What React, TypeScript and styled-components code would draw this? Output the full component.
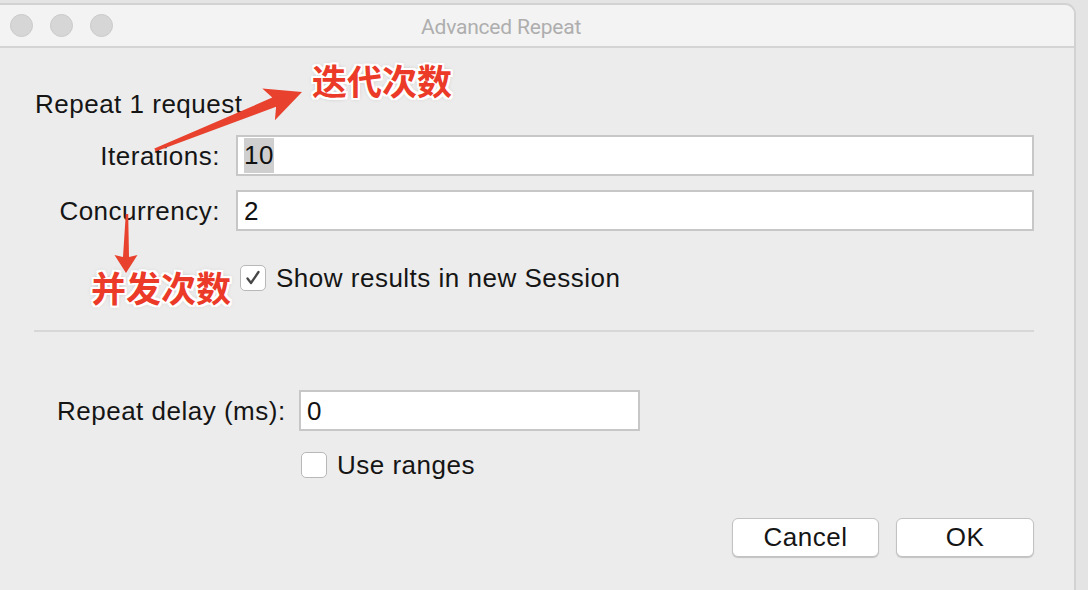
import styled, { createGlobalStyle } from "styled-components";

const GlobalStyle = createGlobalStyle`
  html, body {
    margin: 0;
    padding: 0;
    background: #e4e4e4;
  }
  * { box-sizing: border-box; }
`;

export default function App() {
  return (
    <Page>
      <GlobalStyle />
      <Window>
        <TitleBar>
          <Lights>
            <Light />
            <Light />
            <Light />
          </Lights>
          <Title>Advanced Repeat</Title>
        </TitleBar>
        <Body>
          <Heading>Repeat 1 request</Heading>
          <TopForm>
            <Label>Iterations:</Label>
            <Field>
              <Selected>10</Selected>
            </Field>
            <Label>Concurrency:</Label>
            <Field>2</Field>
            <CheckRow $first>
              <Box>
                <CheckMark />
              </Box>
              <CheckText>Show results in new Session</CheckText>
            </CheckRow>
          </TopForm>
          <Divider />
          <DelayForm>
            <Label>Repeat delay (ms):</Label>
            <Field>0</Field>
            <CheckRow>
              <Box />
              <CheckText>Use ranges</CheckText>
            </CheckRow>
          </DelayForm>
          <Buttons>
            <Button $w={147}>Cancel</Button>
            <Button $w={138}>OK</Button>
          </Buttons>
        </Body>
      </Window>

      <Arrows width="1088" height="590" viewBox="0 0 1088 590">
        <polygon
          fill="#e8412d"
          points="154.4,148.6 272.3,97.6 262.3,88.6 302,92 274.9,120.2 276.1,106.8 155.6,151.4"
        />
        <polygon
          fill="#e8412d"
          points="125.8,214 128.2,214 129,257 137.5,255 126,273 114.5,255 123,257"
        />
      </Arrows>
      <Note $x={312} $y={61}>迭代次数</Note>
      <Note $x={91} $y={268}>并发次数</Note>
    </Page>
  );
}

function CheckMark() {
  return (
    <svg width="22" height="22" viewBox="0 0 22 22">
      <polyline
        points="5.5,11.5 9,16 16.5,5"
        fill="none"
        stroke="#474747"
        strokeWidth="2.3"
        strokeLinecap="round"
        strokeLinejoin="round"
      />
    </svg>
  );
}

const Page = styled.div`
  position: relative;
  width: 1088px;
  height: 590px;
  overflow: hidden;
  padding: 3px 12px 0 0;
  font-family: "Liberation Sans", Arial, sans-serif;
  color: #151515;
`;

const Window = styled.div`
  height: 600px;
  background: #ececec;
  border: 2px solid #d2d2d2;
  border-left: none;
  border-radius: 0 11px 0 0;
  overflow: hidden;
`;

const TitleBar = styled.div`
  display: flex;
  align-items: center;
  height: 43px;
  background: #f3f3f3;
  border-bottom: 2px solid #d4d4d4;
  padding-left: 10px;
`;

const Lights = styled.div`
  display: flex;
  gap: 17px;
`;

const Light = styled.span`
  width: 23px;
  height: 23px;
  border-radius: 50%;
  background: #d6d6d6;
  border: 1px solid #cacaca;
`;

const Title = styled.div`
  margin: 3px 0 0 308px;
  font-family: Roboto, "Liberation Sans", sans-serif;
  font-size: 21px;
  letter-spacing: -0.2px;
  color: #aeaeae;
  line-height: 26px;
`;

const Body = styled.div`
  display: flex;
  flex-direction: column;
  padding: 41px 40px 0 35px;
  font-size: 26px;
  letter-spacing: 0.5px;
`;

const Heading = styled.div`
  line-height: 30px;
`;

const TopForm = styled.div`
  display: grid;
  grid-template-columns: 185px 1fr;
  column-gap: 16px;
  row-gap: 14px;
  align-items: center;
  margin-top: 16px;
`;

const DelayForm = styled.div`
  display: grid;
  grid-template-columns: 228px 341px;
  column-gap: 14px;
  row-gap: 21px;
  align-items: center;
  margin: 58px 0 0 22px;
`;

const Label = styled.div`
  text-align: right;
  white-space: nowrap;
  line-height: 30px;
`;

const Field = styled.div`
  display: flex;
  align-items: center;
  height: 41px;
  background: #ffffff;
  border: 2px solid #c7c7c7;
  padding-left: 6px;
  line-height: 30px;
  color: #111;
`;

const Selected = styled.span`
  background: #cfcfcf;
  padding: 2px 0 3px;
  line-height: 30px;
`;

const CheckRow = styled.div<{ $first?: boolean }>`
  grid-column: 2;
  display: flex;
  align-items: center;
  gap: 10px;
  padding-left: ${(p) => (p.$first ? "4px" : "2px")};
  margin-top: ${(p) => (p.$first ? "20px" : "0")};
  height: 26px;
`;

const Box = styled.span`
  display: flex;
  align-items: center;
  justify-content: center;
  width: 26px;
  height: 26px;
  border-radius: 5px;
  background: #ffffff;
  border: 1.5px solid #b8b8b8;
`;

const CheckText = styled.span`
  line-height: 30px;
  white-space: nowrap;
`;

const Divider = styled.div`
  height: 2px;
  margin: 39px 0 0 -1px;
  background: #d7d7d7;
`;

const Buttons = styled.div`
  display: flex;
  justify-content: flex-end;
  gap: 17px;
  margin-top: 40px;
`;

const Button = styled.div<{ $w: number }>`
  display: flex;
  align-items: center;
  justify-content: center;
  width: ${(p) => p.$w}px;
  height: 39px;
  background: #ffffff;
  border: 1px solid #c2c2c2;
  border-radius: 6px;
  box-shadow: 0 1px 1px rgba(0, 0, 0, 0.18);
  color: #151515;
`;

const Arrows = styled.svg`
  position: absolute;
  left: 0;
  top: 0;
  pointer-events: none;
`;

const Note = styled.div<{ $x: number; $y: number }>`
  position: absolute;
  left: ${(p) => p.$x}px;
  top: ${(p) => p.$y}px;
  font-family: "Noto Sans CJK SC", sans-serif;
  font-weight: 700;
  font-size: 35px;
  line-height: 38px;
  color: #ec3a28;
  text-shadow:
    2px 0 0 #fff, -2px 0 0 #fff, 0 2px 0 #fff, 0 -2px 0 #fff,
    2px 2px 0 #fff, -2px -2px 0 #fff, 2px -2px 0 #fff, -2px 2px 0 #fff,
    0 0 5px rgba(0, 0, 0, 0.35);
`;
